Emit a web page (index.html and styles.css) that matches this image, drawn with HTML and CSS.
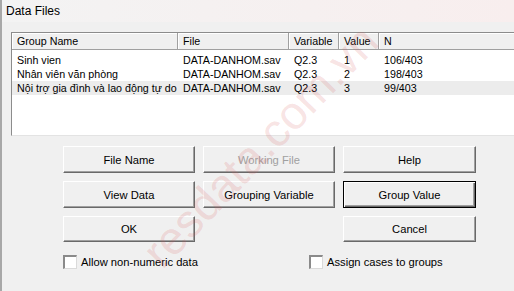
FILE: index.html
```html
<!DOCTYPE html>
<html lang="vi">

<head>
    <meta charset="UTF-8">
    <title>Data Files</title>
    <link rel="stylesheet" href="styles.css">
</head>

<body>
    <div class="window">
        <div class="titlebar">Data Files</div>

        <div class="dialog">
            <div class="listbox">
                <div class="list-head">
                    <div class="head-cell">Group Name</div>
                    <div class="head-cell">File</div>
                    <div class="head-cell">Variable</div>
                    <div class="head-cell">Value</div>
                    <div class="head-cell">N</div>
                </div>
                <div class="list-rows">
                    <div class="list-row">
                        <span>Sinh vien</span>
                        <span>DATA-DANHOM.sav</span>
                        <span>Q2.3</span>
                        <span>1</span>
                        <span>106/403</span>
                    </div>
                    <div class="list-row">
                        <span>Nhân viên văn phòng</span>
                        <span>DATA-DANHOM.sav</span>
                        <span>Q2.3</span>
                        <span>2</span>
                        <span>198/403</span>
                    </div>
                    <div class="list-row hover">
                        <span>Nội trợ gia đình và lao động tự do</span>
                        <span>DATA-DANHOM.sav</span>
                        <span>Q2.3</span>
                        <span>3</span>
                        <span>99/403</span>
                    </div>
                </div>
            </div>

            <div class="buttons">
                <button class="btn">File Name</button>
                <button class="btn" disabled>Working File</button>
                <button class="btn">Help</button>
                <button class="btn">View Data</button>
                <button class="btn">Grouping Variable</button>
                <button class="btn btn-default">Group Value</button>
                <button class="btn">OK</button>
                <span></span>
                <button class="btn">Cancel</button>
            </div>

            <div class="options">
                <label class="option option-wide"><span class="check"></span>Allow non-numeric data</label>
                <label class="option"><span class="check"></span>Assign cases to groups</label>
            </div>
        </div>

        <!-- marca d'agua por cima do dialogo -->
        <div class="watermark">resdata.com.vn</div>
    </div>
</body>

</html>
```

FILE: styles.css
```css
body {
    margin: 0;
    padding: 0;
    font-family: "Liberation Sans", Arial, sans-serif;
    font-size: 11px;
    color: #000;
    background-color: #f0f0f0;
}

.window {
    position: relative;
    width: 512px;
    height: 291px;
    border-left: 2px solid #a8a8a8;
    overflow: hidden;
}

.titlebar {
    height: 22px;
    line-height: 22px;
    padding-left: 4px;
    font-size: 12px;
    background: linear-gradient(to right, #f3f3f3, #f8eeee);
}

.dialog {
    padding: 10px 0 0 9px;
}

/* lista de grupos */

.listbox {
    width: 540px;
    height: 102px;
    border-top: 1px solid #8c8c8c;
    border-left: 1px solid #8c8c8c;
    border-bottom: 1px solid #e3e3e3;
    background-color: #fff;
    font-size: 10.7px;
}

.list-head,
.list-row {
    display: grid;
    grid-template-columns: 166px 111px 50px 40px 1fr;
}

.head-cell {
    height: 16px;
    line-height: 16px;
    padding-left: 5px;
    background-color: #f0f0f0;
    border-right: 1px solid #a0a0a0;
    border-bottom: 1px solid #a0a0a0;
    box-shadow: inset 1px 1px #fff;
}

.list-rows {
    padding-top: 3px;
}

.list-row {
    height: 14px;
    line-height: 14px;
}

.list-row span {
    padding-left: 5px;
    white-space: nowrap;
}

.list-row.hover {
    background-color: #ececec;
}

/* botoes */

.buttons {
    display: grid;
    grid-template-columns: 132px 132px 133px;
    grid-template-rows: 27px 27px 26px;
    column-gap: 8px;
    row-gap: 8px;
    margin: 10px 0 0 52px;
}

.btn {
    font-family: inherit;
    font-size: 11.2px;
    color: #000;
    padding: 0;
    background-color: #f0f0f0;
    border: 1px solid;
    border-color: #fff #696969 #696969 #fff;
    box-shadow: inset -1px -1px #a0a0a0;
}

.btn:disabled {
    color: #a0a0a0;
}

.btn-default {
    border-color: #000;
    box-shadow: inset 1px 1px #fff, inset -1px -1px #696969, inset -2px -2px #a0a0a0;
}

/* opcoes */

.options {
    display: flex;
    margin: 13px 0 0 52px;
}

.option {
    display: flex;
    align-items: center;
    gap: 4px;
    font-size: 11.2px;
}

.option-wide {
    width: 246px;
}

.check {
    width: 11px;
    height: 11px;
    background-color: #fff;
    border-top: 2px solid #8a8a8a;
    border-left: 2px solid #8a8a8a;
    border-right: 1px solid #dadada;
    border-bottom: 1px solid #dadada;
}

.watermark {
    position: absolute;
    left: 258px;
    top: 146px;
    transform: translate(-50%, -50%) rotate(-46deg);
    font-size: 46px;
    color: rgba(215, 90, 90, 0.18);
    white-space: nowrap;
    pointer-events: none;
}
```
